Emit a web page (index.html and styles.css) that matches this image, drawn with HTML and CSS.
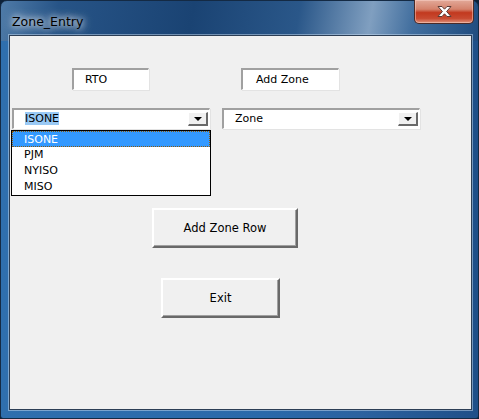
FILE: index.html
```html
<!DOCTYPE html>
<html lang="en">
<head>
    <meta charset="UTF-8">
    <title>Zone_Entry</title>
    <link rel="stylesheet" href="styles.css">
</head>
<body>
    <div class="window">
        <div class="titlebar">
            <span class="title">Zone_Entry</span>
            <button class="close-btn" type="button" aria-label="Close">
                <svg width="15" height="11" viewBox="0 0 15 11">
                    <path d="M1 0.5 H5 L7.5 3.2 L10 0.5 H14 L9.6 5.5 L14 10.5 H10 L7.5 7.8 L5 10.5 H1 L5.4 5.5 Z"
                          fill="#fff" stroke="#5a3a36" stroke-width="1" stroke-linejoin="round"/>
                </svg>
            </button>
        </div>

        <div class="client">
            <div class="label-row">
                <div class="label-box rto">RTO</div>
                <div class="label-box add-zone">Add Zone</div>
            </div>

            <div class="combo-row">
                <div class="combo">
                    <span class="combo-text"><span class="selected-text">ISONE</span></span>
                    <span class="combo-arrow"></span>
                    <ul class="dropdown">
                        <li class="active">ISONE</li>
                        <li>PJM</li>
                        <li>NYISO</li>
                        <li>MISO</li>
                    </ul>
                </div>
                <div class="combo">
                    <span class="combo-text">Zone</span>
                    <span class="combo-arrow"></span>
                </div>
            </div>

            <button type="button" class="form-btn add-row">Add Zone Row</button>
            <button type="button" class="form-btn exit">Exit</button>
        </div>
    </div>
</body>
</html>
```

FILE: styles.css
```css
:root {
    --face: #f0f0f0;
    --shadow: #a0a0a0;
    --dark-shadow: #696969;
    --highlight: #3399ff;
}

* {
    box-sizing: border-box;
}

body {
    margin: 0;
    background: #0d2138;
    font-family: 'DejaVu Sans', Verdana, sans-serif;
    font-size: 11px;
    color: #000;
}

.window {
    width: 479px;
    height: 419px;
    display: flex;
    flex-direction: column;
    padding: 0 6px 8px 8px;
    border: 1px solid #142a44;
    border-radius: 7px 7px 3px 3px;
    background:
        linear-gradient(100deg, #4f7ba8 0%, #275487 12%, #1a4373 40%, #2a5789 62%, #809fc0 77%, #416e9e 86%, #204c7f 100%) top / 100% 40px no-repeat,
        linear-gradient(90deg, #2f6fae 0%, #2a69aa 55%, #2c62a0 75%, #1f4f88 100%);
}

.titlebar {
    height: 34px;
    display: flex;
    align-items: flex-start;
    position: relative;
}

.title {
    margin: 13px 0 0 3px;
    font-family: 'DejaVu Sans', sans-serif;
    font-size: 12.5px;
    color: #000;
    text-shadow: 0 0 6px #fff, 0 0 10px rgba(255, 255, 255, 0.8), 0 0 14px rgba(255, 255, 255, 0.6);
}

.close-btn {
    position: absolute;
    top: -1px;
    right: -2px;
    width: 60px;
    height: 24px;
    padding: 0;
    border: 1px solid #4a2a28;
    border-top: none;
    border-radius: 0 0 5px 5px;
    background: linear-gradient(180deg, #e2a999 0%, #d4826c 40%, #c2391f 55%, #c84a31 80%, #e0927a 100%);
    box-shadow: inset 0 0 0 1px rgba(255, 220, 210, 0.45);
    display: flex;
    align-items: center;
    justify-content: center;
}

.client {
    flex: 1;
    background: var(--face);
    border: 1px solid #2c3e55;
    box-shadow: 0 0 0 1px rgba(200, 220, 240, 0.5);
    padding-top: 32px;
}

.label-row {
    display: flex;
}

.label-box {
    height: 22px;
    line-height: 19px;
    background: #fff;
    border-top: 2px solid var(--shadow);
    border-left: 2px solid var(--shadow);
    border-right: 1px solid #fff;
    border-bottom: 1px solid #fff;
    box-shadow: 1px 1px 0 #e3e3e3;
}

.rto {
    width: 77px;
    margin-left: 62px;
    padding-left: 11px;
}

.add-zone {
    width: 98px;
    margin-left: 92px;
    padding-left: 13px;
}

.combo-row {
    display: flex;
    gap: 12px;
    margin: 18px 0 0 2px;
}

.combo {
    position: relative;
    width: 198px;
    height: 21px;
    display: flex;
    align-items: center;
    background: #fff;
    border-top: 2px solid var(--shadow);
    border-left: 2px solid var(--shadow);
    border-right: 1px solid #fff;
    border-bottom: 1px solid #fff;
    box-shadow: 1px 1px 0 #e3e3e3;
}

.combo-text {
    flex: 1;
    padding-left: 11px;
    line-height: 16px;
}

.selected-text {
    background: #99c9f5;
}

.combo-arrow {
    width: 20px;
    height: 14px;
    margin-right: 1px;
    background: var(--face);
    border-top: 1px solid #fff;
    border-left: 1px solid #fff;
    border-right: 2px solid var(--dark-shadow);
    border-bottom: 2px solid var(--dark-shadow);
    position: relative;
}

.combo-arrow::after {
    content: "";
    position: absolute;
    left: 5px;
    top: 4px;
    border-left: 4px solid transparent;
    border-right: 4px solid transparent;
    border-top: 4px solid #000;
}

.dropdown {
    position: absolute;
    top: 20px;
    left: -3px;
    width: 200px;
    margin: 0;
    padding: 0;
    list-style: none;
    background: #fff;
    border: 1px solid #000;
    z-index: 2;
}

.dropdown li {
    height: 16px;
    line-height: 15px;
    padding-left: 12px;
}

.dropdown li.active {
    background: var(--highlight);
    color: #fff;
    border: 1px dotted #8a5a10;
    padding-left: 11px;
}

.form-btn {
    display: block;
    font-family: inherit;
    font-size: 11.5px;
    color: #000;
    height: 40px;
    background: var(--face);
    border-top: 2px solid #fff;
    border-left: 2px solid #fff;
    border-right: 2px solid var(--dark-shadow);
    border-bottom: 2px solid var(--dark-shadow);
    box-shadow: inset -1px -1px 0 var(--shadow);
    padding: 0;
}

.add-row {
    width: 146px;
    margin: 79px 0 0 142px;
}

.exit {
    width: 119px;
    margin: 30px 0 0 151px;
}
```
